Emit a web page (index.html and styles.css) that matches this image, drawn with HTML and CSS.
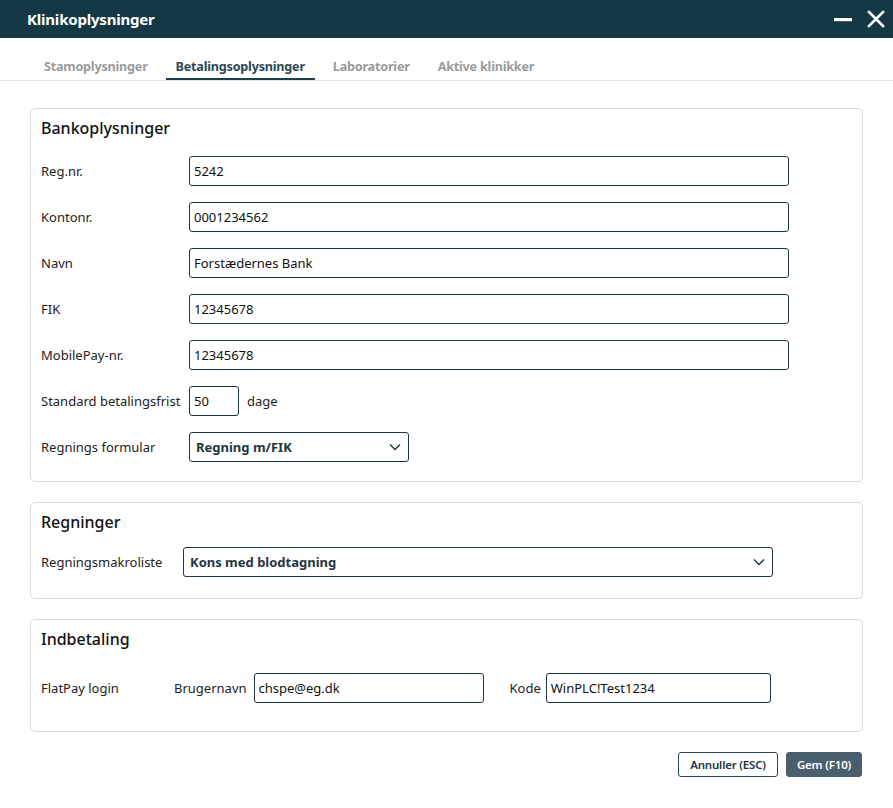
FILE: index.html
```html
<!DOCTYPE html>
<html lang="da">
<head>
    <meta charset="UTF-8">
    <meta name="viewport" content="width=device-width, initial-scale=1.0">
    <title>Klinikoplysninger</title>
    <link rel="stylesheet" href="styles.css">
</head>
<body>
    <header class="titlebar">
        <h1>Klinikoplysninger</h1>
        <div class="window-buttons">
            <svg class="btn-min" width="18" height="4" viewBox="0 0 18 4"><rect x="0" y="0" width="18" height="3.2" fill="#fff"/></svg>
            <svg class="btn-close" width="18" height="18" viewBox="0 0 18 18"><path d="M2 2 L16 16 M16 2 L2 16" stroke="#fff" stroke-width="2.6" stroke-linecap="square"/></svg>
        </div>
    </header>

    <nav class="tabs">
        <span class="tab">Stamoplysninger</span>
        <span class="tab active">Betalingsoplysninger</span>
        <span class="tab">Laboratorier</span>
        <span class="tab">Aktive klinikker</span>
    </nav>

    <main class="content">
        <section class="card bank">
            <h2>Bankoplysninger</h2>
            <div class="row">
                <label>Reg.nr.</label>
                <input class="field wide" type="text" value="5242">
            </div>
            <div class="row">
                <label>Kontonr.</label>
                <input class="field wide" type="text" value="0001234562">
            </div>
            <div class="row">
                <label>Navn</label>
                <input class="field wide" type="text" value="Forstædernes Bank">
            </div>
            <div class="row">
                <label>FIK</label>
                <input class="field wide" type="text" value="12345678">
            </div>
            <div class="row">
                <label>MobilePay-nr.</label>
                <input class="field wide" type="text" value="12345678">
            </div>
            <div class="row">
                <label>Standard betalingsfrist</label>
                <input class="field tiny" type="text" value="50">
                <span class="unit">dage</span>
            </div>
            <div class="row">
                <label>Regnings formular</label>
                <div class="select short">
                    <span>Regning m/FIK</span>
                    <svg width="12" height="8" viewBox="0 0 12 8"><path d="M1 1.5 L6 6.5 L11 1.5" fill="none" stroke="#1e3642" stroke-width="1.4"/></svg>
                </div>
            </div>
        </section>

        <section class="card bills">
            <h2>Regninger</h2>
            <div class="row">
                <label class="lbl-macro">Regningsmakroliste</label>
                <div class="select long">
                    <span>Kons med blodtagning</span>
                    <svg width="12" height="8" viewBox="0 0 12 8"><path d="M1 1.5 L6 6.5 L11 1.5" fill="none" stroke="#1e3642" stroke-width="1.4"/></svg>
                </div>
            </div>
        </section>

        <section class="card payin">
            <h2>Indbetaling</h2>
            <div class="row login">
                <label class="lbl-flat">FlatPay login</label>
                <span class="sub-label">Brugernavn</span>
                <input class="field user" type="text" value="chspe@eg.dk">
                <span class="sub-label code">Kode</span>
                <input class="field pass" type="text" value="WinPLC!Test1234">
            </div>
        </section>

        <div class="actions">
            <button class="btn cancel">Annuller (ESC)</button>
            <button class="btn primary">Gem (F10)</button>
        </div>
    </main>
</body>
</html>
```

FILE: styles.css
```css
body {
    margin: 0;
    font-family: "Noto Sans", "Open Sans", sans-serif;
    font-size: 13px;
    color: #222;
    background: #fff;
}
.titlebar {
    height: 38px;
    background: #153845;
    display: flex;
    align-items: center;
    justify-content: space-between;
    padding: 0 8px 0 27px;
}
.titlebar h1 {
    margin: 0;
    color: #fff;
    font-size: 15px;
    font-weight: 700;
    letter-spacing: -0.2px;
}
.window-buttons {
    display: flex;
    align-items: center;
    gap: 15px;
}
.btn-min {
    margin-top: 1px;
}

/* tab strip */
.tabs {
    display: flex;
    gap: 8px;
    padding: 0 0 0 34px;
    margin-top: 21px;
    border-bottom: 1px solid #dde2e5;
    height: 21px;
}
.tab {
    font-size: 12.6px;
    font-weight: 700;
    color: #9a9a9a;
    padding: 0 10px;
    letter-spacing: -0.2px;
    line-height: 16px;
}
.tab.active {
    color: #2b4754;
    border-bottom: 2px solid #1e3c4a;
    height: 19px;
}

.content {
    padding: 27px 30px 0 30px;
}
.card {
    box-sizing: border-box;
    border: 1px solid #d9d9d9;
    border-radius: 5px;
    padding: 8px 10px 0 10px;
    margin-bottom: 20px;
}
.card h2 {
    margin: 0;
    font-size: 16px;
    font-weight: 500;
    color: #111;
    line-height: 22px;
}
.bank {
    height: 374px;
}
.bank h2 {
    margin-bottom: 17px;
}
.row {
    display: flex;
    align-items: center;
    height: 30px;
    margin-bottom: 16px;
}
.row label {
    width: 148px;
    flex: none;
    font-size: 13px;
    color: #222;
}
.field {
    box-sizing: border-box;
    height: 30px;
    border: 1px solid #1e3642;
    border-radius: 3px;
    padding: 0 4px;
    font-family: inherit;
    font-size: 13px;
    color: #111;
    background: #fff;
    outline: none;
}
.field.wide {
    width: 600px;
}
.field.tiny {
    width: 50px;
}
.unit {
    margin-left: 8px;
}
.select {
    box-sizing: border-box;
    height: 30px;
    border: 1px solid #1e3642;
    border-radius: 3px;
    padding: 0 7px 0 6px;
    display: flex;
    align-items: center;
    justify-content: space-between;
    font-weight: 700;
    color: #1e3642;
}
.select.short {
    width: 220px;
}
.select.long {
    width: 590px;
}

.bills {
    height: 97px;
}
.bills h2 {
    margin-bottom: 14px;
}
.bills .lbl-macro {
    width: 142px;
}

.payin {
    height: 113px;
}
.payin h2 {
    margin-bottom: 23px;
}
.payin .lbl-flat {
    width: 133px;
}
.sub-label {
    margin-right: 7px;
}
.sub-label.code {
    margin-left: 26px;
    margin-right: 5px;
}
.field.user {
    width: 230px;
}
.field.pass {
    width: 225px;
}

/* footer buttons */
.actions {
    display: flex;
    justify-content: flex-end;
    gap: 8px;
    margin-top: 1px;
    padding-right: 1px;
}
.btn {
    box-sizing: border-box;
    height: 25px;
    padding: 0;
    border: 1px solid #2b4754;
    border-radius: 3px;
    background: #fff;
    color: #1e3642;
    font-family: inherit;
    font-size: 11.5px;
    font-weight: 600;
    letter-spacing: -0.2px;
}
.btn.cancel {
    width: 100px;
}
.btn.primary {
    width: 76px;
    background: #4a5f6d;
    border-color: #4a5f6d;
    color: #fff;
}
```
